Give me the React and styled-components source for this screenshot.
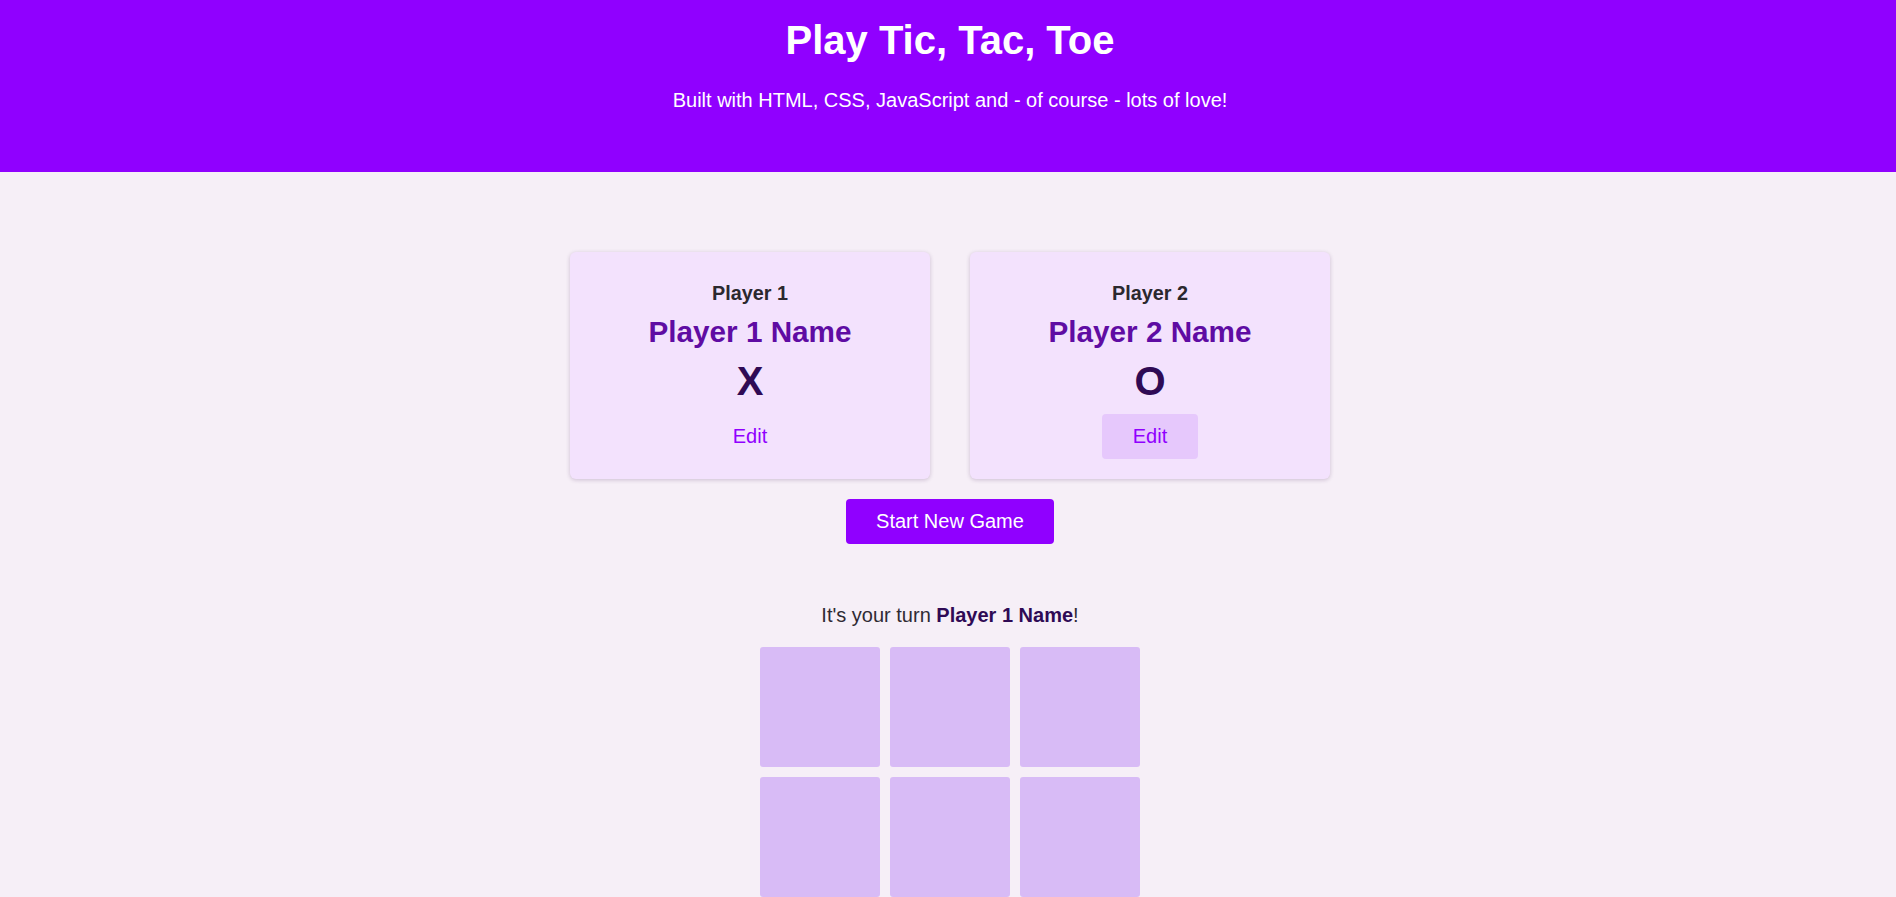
import React, { useState } from 'react';
import styled, { createGlobalStyle } from 'styled-components';

const GlobalStyle = createGlobalStyle`
  * {
    box-sizing: border-box;
  }

  body {
    margin: 0;
    font-family: "Liberation Sans", Arial, sans-serif;
    background-color: #f6eff7;
    color: #2c2a30;
  }
`;

const Header = styled.header`
  background-color: #9000ff;
  color: white;
  text-align: center;
  padding: 17px 0 60px 4px;

  h1 {
    margin: 0;
    font-size: 40px;
    line-height: 46px;
    font-weight: 700;
  }

  p {
    margin: 26px 0 0;
    font-size: 20px;
    line-height: 23px;
  }
`;

const Main = styled.main`
  display: flex;
  flex-direction: column;
  align-items: center;
  padding: 80px 0 0 4px;
`;

const PlayerList = styled.ol`
  list-style: none;
  margin: 0;
  padding: 0;
  display: flex;
  gap: 40px;
`;

const PlayerCard = styled.li`
  width: 360px;
  height: 227px;
  padding: 30px 20px 20px;
  display: flex;
  flex-direction: column;
  align-items: center;
  background-color: #f3e2fd;
  border-radius: 6px;
  box-shadow: 0 1px 4px rgba(60, 20, 80, 0.22);
  text-align: center;
`;

const Label = styled.h3`
  margin: 0;
  font-size: 19.8px;
  line-height: 22px;
  font-weight: 700;
  color: #2b282e;
`;

const Name = styled.h2`
  margin: 11px 0 0;
  font-size: 29.7px;
  line-height: 33px;
  font-weight: 700;
  color: #5f0ca3;
`;

const Symbol = styled.p`
  margin: 10px 0 0;
  font-size: 40px;
  line-height: 46px;
  font-weight: 700;
  color: #2f0a55;
`;

const EditButton = styled.button`
  margin-top: 10px;
  padding: 11px 31px;
  font: inherit;
  font-size: 20px;
  line-height: 23px;
  color: #9000ff;
  border: none;
  border-radius: 4px;
  cursor: pointer;
  background-color: ${({ $active }) => ($active ? '#e6c8fc' : 'transparent')};
`;

const StartButton = styled.button`
  margin-top: 20px;
  padding: 11px 30px;
  font: inherit;
  font-size: 20px;
  line-height: 23px;
  color: white;
  background-color: #9000ff;
  border: none;
  border-radius: 4px;
  cursor: pointer;
`;

const Turn = styled.p`
  margin: 60px 0 0;
  font-size: 20px;
  line-height: 23px;
  color: #2f2b33;

  strong {
    color: #2f0a55;
  }
`;

const Board = styled.ol`
  list-style: none;
  margin: 20px 0 0;
  padding: 0;
  display: grid;
  grid-template-columns: repeat(3, 120px);
  grid-auto-rows: 120px;
  gap: 10px;
`;

const Cell = styled.li`
  background-color: #d8bbf6;
  border-radius: 3px;
  cursor: pointer;
`;

const players = [
  { label: 'Player 1', name: 'Player 1 Name', symbol: 'X' },
  { label: 'Player 2', name: 'Player 2 Name', symbol: 'O' },
];

export default function App() {
  const [hovered, setHovered] = useState(1);

  return (
    <>
      <GlobalStyle />
      <Header>
        <h1>Play Tic, Tac, Toe</h1>
        <p>Built with HTML, CSS, JavaScript and - of course - lots of love!</p>
      </Header>
      <Main>
        <PlayerList>
          {players.map((player, index) => (
            <PlayerCard key={player.label}>
              <Label>{player.label}</Label>
              <Name>{player.name}</Name>
              <Symbol>{player.symbol}</Symbol>
              <EditButton
                $active={hovered === index}
                onMouseEnter={() => setHovered(index)}
              >
                Edit
              </EditButton>
            </PlayerCard>
          ))}
        </PlayerList>
        <StartButton>Start New Game</StartButton>
        <Turn>
          It's your turn <strong>Player 1 Name</strong>!
        </Turn>
        <Board>
          {Array.from({ length: 9 }).map((_, i) => (
            <Cell key={i} />
          ))}
        </Board>
      </Main>
    </>
  );
}
